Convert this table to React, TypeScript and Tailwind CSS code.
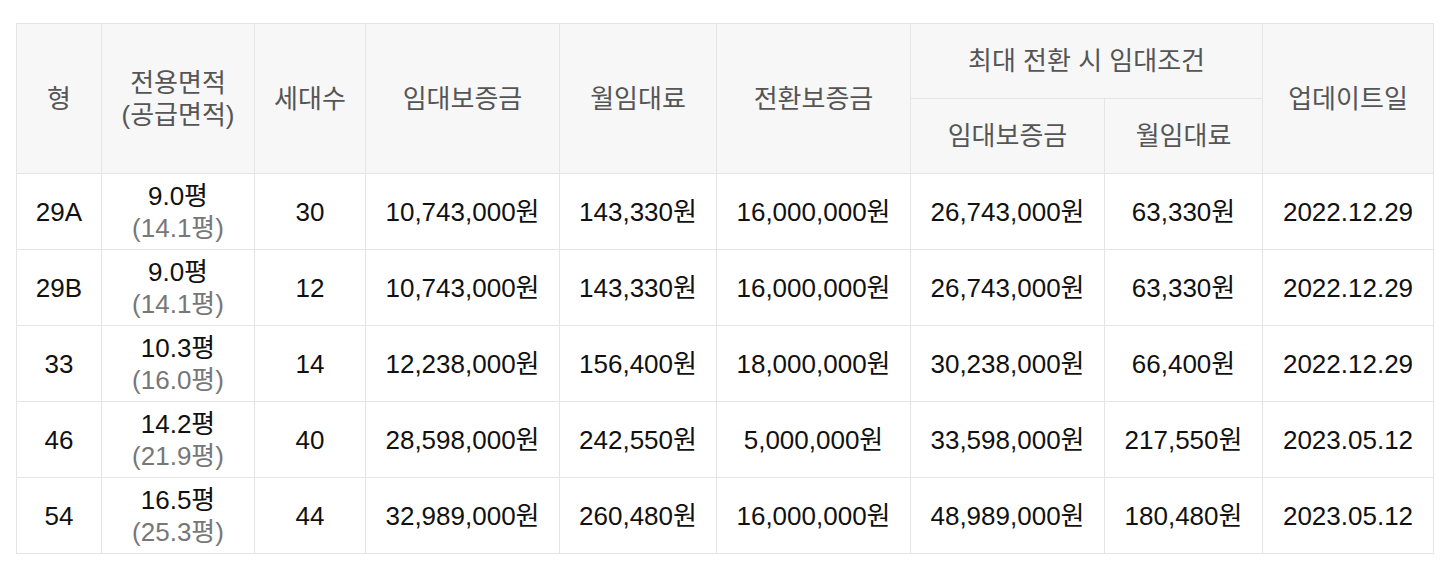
import React from 'react';

interface Row {
  type: string;
  area: string;
  supply: string;
  units: string;
  deposit: string;
  rent: string;
  convert: string;
  maxDeposit: string;
  maxRent: string;
  updated: string;
}

const rows: Row[] = [
  { type: '29A', area: '9.0평', supply: '(14.1평)', units: '30', deposit: '10,743,000원', rent: '143,330원', convert: '16,000,000원', maxDeposit: '26,743,000원', maxRent: '63,330원', updated: '2022.12.29' },
  { type: '29B', area: '9.0평', supply: '(14.1평)', units: '12', deposit: '10,743,000원', rent: '143,330원', convert: '16,000,000원', maxDeposit: '26,743,000원', maxRent: '63,330원', updated: '2022.12.29' },
  { type: '33', area: '10.3평', supply: '(16.0평)', units: '14', deposit: '12,238,000원', rent: '156,400원', convert: '18,000,000원', maxDeposit: '30,238,000원', maxRent: '66,400원', updated: '2022.12.29' },
  { type: '46', area: '14.2평', supply: '(21.9평)', units: '40', deposit: '28,598,000원', rent: '242,550원', convert: '5,000,000원', maxDeposit: '33,598,000원', maxRent: '217,550원', updated: '2023.05.12' },
  { type: '54', area: '16.5평', supply: '(25.3평)', units: '44', deposit: '32,989,000원', rent: '260,480원', convert: '16,000,000원', maxDeposit: '48,989,000원', maxRent: '180,480원', updated: '2023.05.12' },
];

const th = 'border border-[#e5e5e5] bg-[#f7f7f7] font-normal text-[#555] text-center align-middle';
const td = 'border border-[#e5e5e5] text-center align-middle text-[#111]';

export default function App() {
  return (
    <div className="min-h-[562px] bg-white pl-4 pt-[23px] font-['Liberation_Sans','Noto_Sans_CJK_KR',sans-serif] text-[26px] leading-8">
      <table className="table-fixed border-collapse w-[1417px] border-t border-t-[#cfcfcf]">
        <colgroup>
          <col className="w-[85px]" />
          <col className="w-[153px]" />
          <col className="w-[111px]" />
          <col className="w-[194px]" />
          <col className="w-[157px]" />
          <col className="w-[194px]" />
          <col className="w-[194px]" />
          <col className="w-[158px]" />
          <col className="w-[171px]" />
        </colgroup>
        <thead>
          <tr className="h-[75px]">
            <th rowSpan={2} className={th}>형</th>
            <th rowSpan={2} className={th}>전용면적<br />(공급면적)</th>
            <th rowSpan={2} className={th}>세대수</th>
            <th rowSpan={2} className={th}>임대보증금</th>
            <th rowSpan={2} className={th}>월임대료</th>
            <th rowSpan={2} className={th}>전환보증금</th>
            <th colSpan={2} className={th}>최대 전환 시 임대조건</th>
            <th rowSpan={2} className={th}>업데이트일</th>
          </tr>
          <tr className="h-[75px]">
            <th className={th}>임대보증금</th>
            <th className={th}>월임대료</th>
          </tr>
        </thead>
        <tbody>
          {rows.map((r) => (
            <tr key={r.type} className="h-[76px]">
              <td className={td}>{r.type}</td>
              <td className={td}>
                <div>{r.area}</div>
                <div className="text-[#777]">{r.supply}</div>
              </td>
              <td className={td}>{r.units}</td>
              <td className={td}>{r.deposit}</td>
              <td className={td}>{r.rent}</td>
              <td className={td}>{r.convert}</td>
              <td className={td}>{r.maxDeposit}</td>
              <td className={td}>{r.maxRent}</td>
              <td className={td}>{r.updated}</td>
            </tr>
          ))}
        </tbody>
      </table>
    </div>
  );
}
